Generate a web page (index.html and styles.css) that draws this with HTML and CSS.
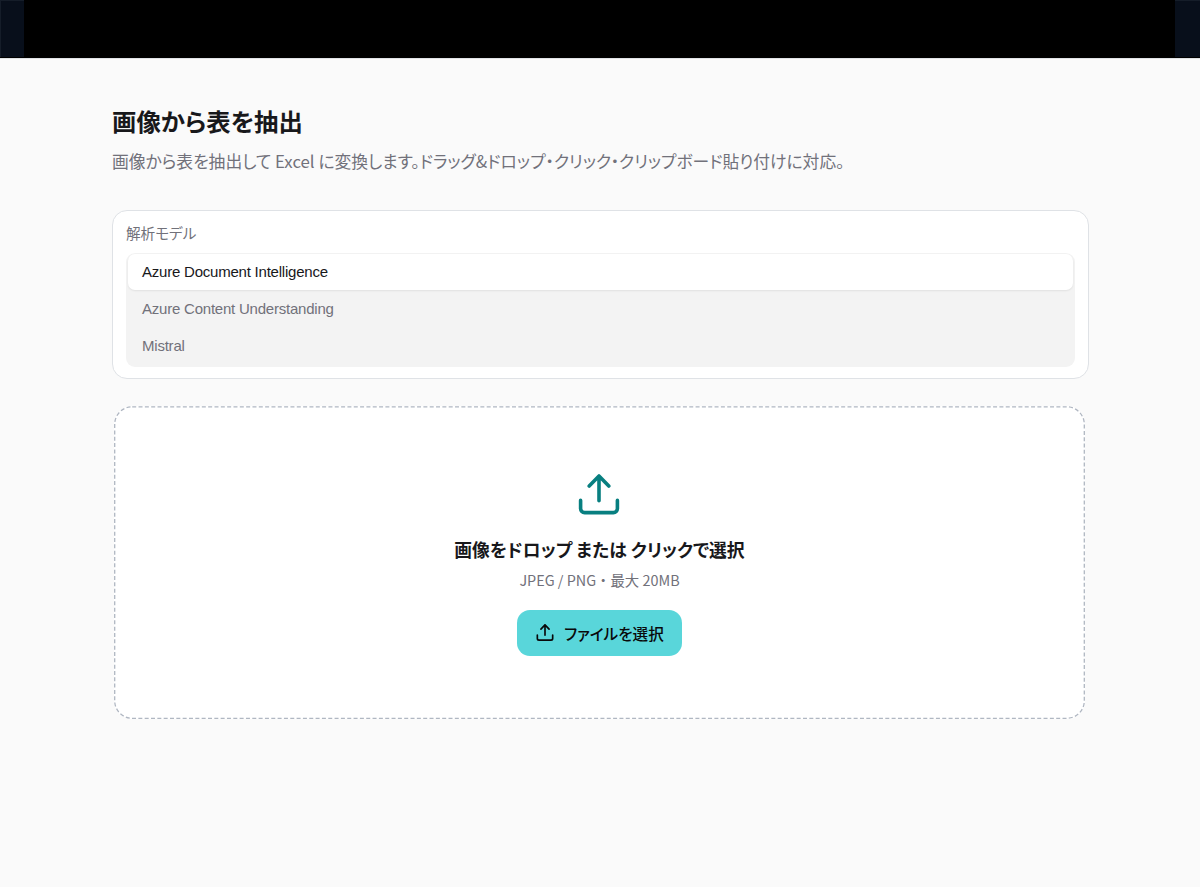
FILE: index.html
```html
<!DOCTYPE html>
<html lang="ja">
<head>
    <meta charset="UTF-8">
    <meta name="viewport" content="width=device-width, initial-scale=1.0">
    <title>画像から表を抽出</title>
    <link rel="stylesheet" href="styles.css">
</head>
<body>
    <div class="page">
        <header class="topbar">
            <div class="topbar-inner"></div>
        </header>

        <main class="container">
            <h1>画像から表を抽出</h1>
            <p class="lead">画像から表を抽出して Excel に変換します。ドラッグ&amp;ドロップ・クリック・クリップボード貼り付けに対応。</p>

            <section class="model-card">
                <div class="model-label">解析モデル</div>
                <div class="model-list">
                    <button class="model active" type="button">Azure Document Intelligence</button>
                    <button class="model" type="button">Azure Content Understanding</button>
                    <button class="model" type="button">Mistral</button>
                </div>
            </section>

            <section class="dropzone">
                <svg class="drop-outline" viewBox="0 0 971 313">
                    <rect x="0.7" y="0.8" width="969.6" height="311.5" rx="17.5"/>
                </svg>
                <svg class="drop-icon" viewBox="0 0 24 24">
                    <path d="M12 15.9V3.5M7.1 8.5L12 3.5L16.9 8.5M2.8 15.7V19.8A2 2 0 0 0 4.8 21.8H19.2A2 2 0 0 0 21.2 19.8V15.7"/>
                </svg>
                <h2>画像をドロップ または クリックで選択</h2>
                <p class="hint">JPEG / PNG・最大 20MB</p>
                <button class="select-button" type="button">
                    <svg class="button-icon" viewBox="0 0 24 24">
                        <path d="M12 15.9V3.5M7.1 8.5L12 3.5L16.9 8.5M2.8 15.7V19.8A2 2 0 0 0 4.8 21.8H19.2A2 2 0 0 0 21.2 19.8V15.7"/>
                    </svg>
                    <span>ファイルを選択</span>
                </button>
            </section>
        </main>
    </div>
</body>
</html>
```

FILE: styles.css
```css
* {
    box-sizing: border-box;
}

body {
    margin: 0;
    background: #fff;
    color: #18181b;
    font-family: "Noto Sans CJK JP", sans-serif;
    font-feature-settings: "palt";
}

.page {
    height: 887px;
    background: #fafafa;
}

/* Top bar */
.topbar {
    height: 58px;
    padding: 0 25px 0 24px;
    background: #080f1b;
    border-bottom: 1px solid #000;
    box-shadow: inset 1px 1px 0 #151d29, 0 1px 0 #e0e3e6;
}

.topbar-inner {
    height: 58px;
    background: #000;
}

.container {
    width: 976px;
    margin: 0 auto;
    padding-top: 44px;
}

h1 {
    margin: 0;
    font-size: 24.4px;
    line-height: 38px;
    font-weight: 700;
}

.lead {
    margin: 8px 0 0;
    font-size: 16.8px;
    line-height: 26px;
    color: #71717a;
    white-space: nowrap;
}

/* Model selection */
.model-card {
    width: 977px;
    height: 169px;
    margin-top: 36px;
    padding: 11px 13px;
    background: #fff;
    border: 1px solid #dfe2e6;
    border-radius: 15px;
}

.model-label {
    font-size: 14.6px;
    line-height: 22px;
    color: #71717a;
}

.model-list {
    display: flex;
    flex-direction: column;
    height: 114px;
    margin-top: 9px;
    padding: 1px 2px 1px 1px;
    background: #f3f3f3;
    border-radius: 9px;
}

.model {
    flex-shrink: 0;
    height: 37px;
    padding: 0 15px;
    background: none;
    border: none;
    border-radius: 7px;
    font-family: "Liberation Sans", Arial, sans-serif;
    font-size: 15px;
    letter-spacing: -0.22px;
    text-align: left;
    color: #71717a;
}

.model.active {
    height: 36px;
    margin-left: 1px;
    padding: 0 14px 2px;
    background: #fff;
    color: #18181b;
    box-shadow: 0 1px 2px rgba(0, 0, 0, 0.08);
}

/* Drop area */
.dropzone {
    position: relative;
    display: flex;
    flex-direction: column;
    align-items: center;
    height: 313px;
    margin: 27px 3px 0 2px;
    padding-top: 63px;
    background: #fff;
    border-radius: 18px;
}

.drop-outline {
    position: absolute;
    inset: 0;
    width: 100%;
    height: 100%;
    fill: none;
    stroke: #b0b7c2;
    stroke-width: 1.3;
    stroke-dasharray: 4 2.33;
    pointer-events: none;
}

.drop-icon,
.button-icon {
    fill: none;
    stroke: currentColor;
    stroke-width: 1.8;
    stroke-linecap: round;
    stroke-linejoin: round;
}

.drop-icon {
    width: 48px;
    height: 48px;
    margin-right: 1px;
    color: #087f80;
}

h2 {
    margin: 18px 0 0;
    font-size: 17.8px;
    line-height: 28px;
    font-weight: 700;
}

.hint {
    margin: 6px 0 0;
    font-size: 14.4px;
    line-height: 22px;
    color: #71717a;
    font-feature-settings: normal;
}

.select-button {
    display: flex;
    align-items: center;
    justify-content: center;
    gap: 9px;
    width: 165px;
    height: 46px;
    margin-top: 19px;
    padding: 0;
    background: #59d6da;
    border: none;
    border-radius: 13px;
    color: #09090b;
    font-family: inherit;
    font-feature-settings: inherit;
    font-size: 15.6px;
    font-weight: 500;
}

.button-icon {
    width: 20px;
    height: 20px;
    margin-bottom: 2px;
    stroke-width: 2;
}
```
